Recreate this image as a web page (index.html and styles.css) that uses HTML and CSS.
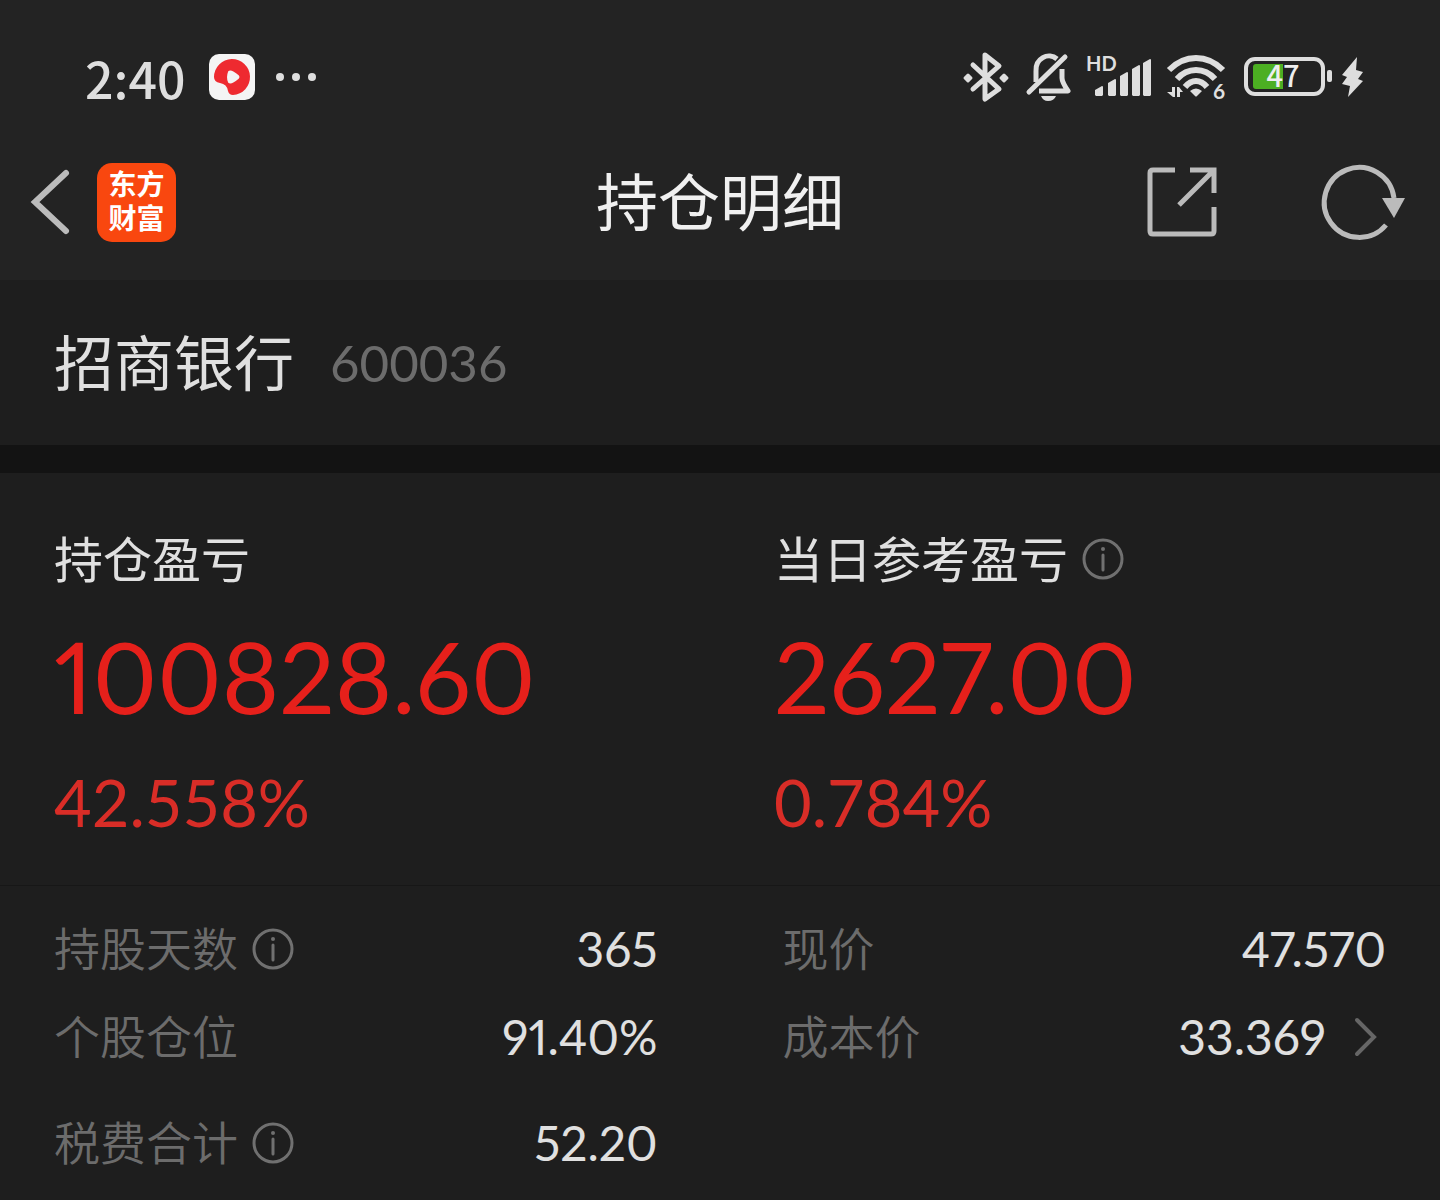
FILE: index.html
```html
<!DOCTYPE html>
<html lang="zh-CN">

<head>
    <meta charset="UTF-8">
    <meta name="viewport" content="width=device-width, initial-scale=1.0">
    <title>持仓明细</title>
    <link rel="stylesheet" href="styles.css">
</head>

<body>

    <div class="topbar">
        <div class="status">
            <span class="time">2:40</span>
            <svg class="status-app" width="46" height="46" viewBox="0 0 46 46">
                <rect width="46" height="46" rx="10" fill="#f4f4f4"/>
                <path d="M5 23A18 18 0 1 1 24 41Q20 41 19 37Q18 30 11 29Q5 28 5 23Z" fill="#ee2a30"/>
                <path d="M20 18Q18 23 20 28Q22 30 29 24Q30 23 29 22Q22 16 20 18Z" fill="#f4f4f4" stroke="#f4f4f4" stroke-width="2"/>
            </svg>
            <svg width="42" height="10" viewBox="0 0 42 10" fill="#dedede">
                <circle cx="5" cy="5" r="4"/><circle cx="21" cy="5" r="4"/><circle cx="37" cy="5" r="4"/>
            </svg>

            <div class="status-icons">
                <!-- bluetooth -->
                <svg width="46" height="50" viewBox="0 0 46 50">
                    <path d="M10 13L36 37L22 47V3L36 14L10 37" fill="none" stroke="#dedede" stroke-width="5" stroke-linecap="round" stroke-linejoin="round"/>
                    <path d="M5 23L8 26L5 29L2 26ZM41 23L44 26L41 29L38 26Z" fill="#dedede" stroke="#dedede" stroke-width="3" stroke-linejoin="round"/>
                </svg>
                <!-- muted bell -->
                <svg width="46" height="48" viewBox="0 0 46 48">
                    <g fill="none" stroke="#dedede" stroke-width="5" stroke-linecap="round" stroke-linejoin="round">
                        <path d="M4 39L40 4"/>
                        <path d="M11 29V18A13 14 0 0 1 32 6" stroke-linecap="butt"/>
                        <path d="M37 16V25Q37 29 43 38H14" stroke-linecap="butt"/>
                    </g>
                    <path d="M16 43H31Q29 48 23 48Q18 48 16 43Z" fill="#dedede"/>
                </svg>
                <!-- signal -->
                <svg width="64" height="44" viewBox="0 0 64 44" fill="#dedede">
                    <text class="svg-text" x="-1" y="16" font-size="20">HD</text>
                    <path d="M8 35L15 31Q16 31 16 32V40L15 41H9L8 40ZM21 28L28 24Q29 24 29 25V40L28 41H22L21 40ZM33 21L40 17Q41 17 41 18V40L40 41H34L33 40ZM45 14L52 10Q53 10 53 11V40L52 41H46L45 40ZM56 8L63 4Q64 4 64 5V40L63 41H57L56 40Z"/>
                </svg>
                <!-- wifi -->
                <svg width="60" height="48" viewBox="0 0 60 48">
                    <g fill="none" stroke="#dedede" stroke-width="6">
                        <path d="M2 17Q14 5 29 5T56 17"/>
                        <path d="M10 26Q18 17 29 17T48 26"/>
                        <path d="M18 34Q23 28 29 28T40 34"/>
                    </g>
                    <path d="M23 38Q29 33 35 38L30 43Q29 44 28 43Z" fill="#dedede"/>
                    <path d="M5 34H8V44H6L0 39H5ZM10 44H13V39H16L12 34H10Z" fill="#dedede"/>
                    <text class="svg-text" x="46" y="46" font-size="21" fill="#dedede">6</text>
                </svg>
                <!-- battery -->
                <svg width="122" height="42" viewBox="0 0 122 42">
                    <rect x="3" y="3" width="77" height="35" rx="9" fill="none" stroke="#dedede" stroke-width="4"/>
                    <path d="M13 8H40V33H13Q10 33 10 30V11Q10 8 13 8Z" fill="#4caf22"/>
                    <rect x="84" y="14" width="5" height="12" rx="2" fill="#dedede"/>
                    <text class="svg-text level" x="40" y="31" font-size="29" text-anchor="middle" fill="#eee">47</text>
                    <path d="M114 1L99 19L104 21L99 28L107 30L105 41L120 25L115 23L120 16L113 14Z" fill="#dedede"/>
                </svg>
            </div>
        </div>

        <header class="header">
            <div class="header-left">
                <button class="icon-btn" aria-label="返回">
                    <svg width="38" height="66" viewBox="0 0 38 66">
                        <path d="M34 4L3 33L34 62" fill="none" stroke="#bbb" stroke-width="6" stroke-linecap="round"/>
                    </svg>
                </button>
                <div class="brand">东方<br>财富</div>
            </div>
            <h1>持仓明细</h1>
            <div class="header-right">
                <button class="icon-btn" aria-label="分享">
                    <svg width="72" height="72" viewBox="0 0 72 72" fill="none" stroke="#bbb" stroke-width="5">
                        <path d="M29 4H7Q4 4 4 7V65Q4 68 7 68H65Q68 68 68 65V41"/>
                        <path d="M44 4H68V27M67 5L33 39"/>
                    </svg>
                </button>
                <button class="icon-btn" aria-label="刷新">
                    <svg width="88" height="80" viewBox="0 0 88 80">
                        <path d="M74 36A35 35 0 1 0 66 63" fill="none" stroke="#bbb" stroke-width="5"/>
                        <path d="M62 36H85L74 56Z" fill="#bbb"/>
                    </svg>
                </button>
            </div>
        </header>
    </div>

    <main>
        <section class="stock">
            <h2>招商银行</h2>
            <span class="code">600036</span>
        </section>

        <section class="summary">
            <div class="profit">
                <h3>持仓盈亏</h3>
                <div class="amount">100828.60</div>
                <div class="percent">42.558%</div>
            </div>
            <div class="profit">
                <h3>当日参考盈亏
                    <button class="icon-btn" aria-label="当日参考盈亏说明">
                        <svg class="info" viewBox="0 0 42 42"><circle cx="21" cy="21" r="19"/><path d="M21 17V32"/><circle class="dot" cx="21" cy="11" r="2"/></svg>
                    </button>
                </h3>
                <div class="amount">2627.00</div>
                <div class="percent">0.784%</div>
            </div>
        </section>

        <section class="details">
            <dl>
                <div class="row">
                    <dt>持股天数
                        <button class="icon-btn" aria-label="持股天数说明">
                            <svg class="info" viewBox="0 0 42 42"><circle cx="21" cy="21" r="19"/><path d="M21 17V32"/><circle class="dot" cx="21" cy="11" r="2"/></svg>
                        </button>
                    </dt>
                    <dd>365</dd>
                </div>
                <div class="row">
                    <dt>个股仓位</dt>
                    <dd>91.40%</dd>
                </div>
                <div class="row fee">
                    <dt>税费合计
                        <button class="icon-btn" aria-label="税费合计说明">
                            <svg class="info" viewBox="0 0 42 42"><circle cx="21" cy="21" r="19"/><path d="M21 17V32"/><circle class="dot" cx="21" cy="11" r="2"/></svg>
                        </button>
                    </dt>
                    <dd>52.20</dd>
                </div>
            </dl>
            <dl>
                <div class="row">
                    <dt>现价</dt>
                    <dd>47.570</dd>
                </div>
                <div class="row">
                    <dt>成本价</dt>
                    <dd>33.369
                        <button class="icon-btn" aria-label="成本价详情">
                            <svg class="arrow" width="24" height="40" viewBox="0 0 24 40">
                                <path d="M3 3L20 20L3 37" fill="none" stroke="#666" stroke-width="4" stroke-linecap="round"/>
                            </svg>
                        </button>
                    </dd>
                </div>
            </dl>
        </section>
    </main>

</body>

</html>
```

FILE: styles.css
```css
* {
    box-sizing: border-box;
}

body {
    margin: 0;
    background-color: #1e1e1e;
    color: #e0e0e0;
    font-family: Lato, "Noto Sans CJK SC", sans-serif;
}

h1,
h2,
h3,
dl,
dd {
    margin: 0;
    font-weight: 400;
}

svg {
    display: block;
    overflow: visible;
}

.icon-btn {
    padding: 0;
    border: none;
    background: none;
    cursor: pointer;
}

.topbar {
    background-color: #232323;
    padding-top: 30px;
}

/* status bar */
.status {
    display: flex;
    align-items: center;
    height: 94px;
    padding: 0 75px 0 85px;
}

.time {
    font-family: "Noto Sans CJK SC", sans-serif;
    font-size: 50px;
    font-weight: 500;
    line-height: 60px;
    color: #dedede;
}

.status-app {
    margin: 0 20px 0 24px;
}

.status-icons {
    display: flex;
    align-items: center;
    gap: 16px;
    margin-left: auto;
}

.svg-text {
    font-family: Lato, sans-serif;
    font-weight: 700;
}

.svg-text.level {
    font-family: "Noto Sans CJK SC", sans-serif;
    font-weight: 500;
}

/* title bar */
.header {
    display: grid;
    grid-template-columns: 1fr auto 1fr;
    align-items: center;
    height: 156px;
    padding: 0 32px;
}

.header-left,
.header-right {
    display: flex;
    align-items: center;
}

.header-left {
    gap: 27px;
}

.header-right {
    justify-content: flex-end;
    gap: 102px;
}

.header h1 {
    font-size: 62px;
    line-height: 80px;
    color: #f0f0f0;
}

.brand {
    width: 79px;
    height: 79px;
    padding-top: 4px;
    border-radius: 15px;
    background-color: #f9470f;
    color: #fff;
    font-size: 28px;
    font-weight: 700;
    line-height: 34px;
    text-align: center;
}

/* stock name */
.stock {
    display: flex;
    align-items: center;
    gap: 36px;
    height: 193px;
    padding: 0 54px;
    border-bottom: 28px solid #131313;
}

.stock h2 {
    font-size: 60px;
    line-height: 80px;
}

.code {
    font-size: 51px;
    line-height: 60px;
    color: #6c6c6c;
}

/* profit */
.summary {
    display: grid;
    grid-template-columns: 1fr 1fr;
    border-bottom: 1px solid #171717;
}

.profit {
    padding: 56px 0 42px 54px;
}

.profit h3 {
    display: flex;
    align-items: center;
    gap: 14px;
    font-size: 49px;
    line-height: 60px;
}

.amount {
    margin-top: 22px;
    font-size: 98px;
    font-variant-numeric: proportional-nums;
    line-height: 130px;
    color: #e6201b;
}

.percent {
    margin-top: 20px;
    font-size: 65px;
    line-height: 82px;
    color: #d92d27;
}

.info {
    width: 42px;
    height: 42px;
    fill: none;
    stroke: #707070;
    stroke-width: 3;
    stroke-linecap: round;
}

.info .dot {
    fill: #707070;
    stroke: none;
}

/* details */
.details {
    display: grid;
    grid-template-columns: 1fr 1fr;
    gap: 125px;
    padding: 19px 54px 0;
}

.row {
    display: flex;
    align-items: center;
    justify-content: space-between;
    height: 88px;
}

.row.fee {
    margin-top: 18px;
}

.row dt {
    display: flex;
    align-items: center;
    gap: 14px;
    font-size: 46px;
    font-weight: 350;
    line-height: 60px;
    color: #6c6c6c;
}

.row dd {
    display: flex;
    align-items: center;
    gap: 28px;
    font-size: 48px;
    font-variant-numeric: proportional-nums;
    line-height: 60px;
}

.arrow {
    margin-right: 8px;
}
```
